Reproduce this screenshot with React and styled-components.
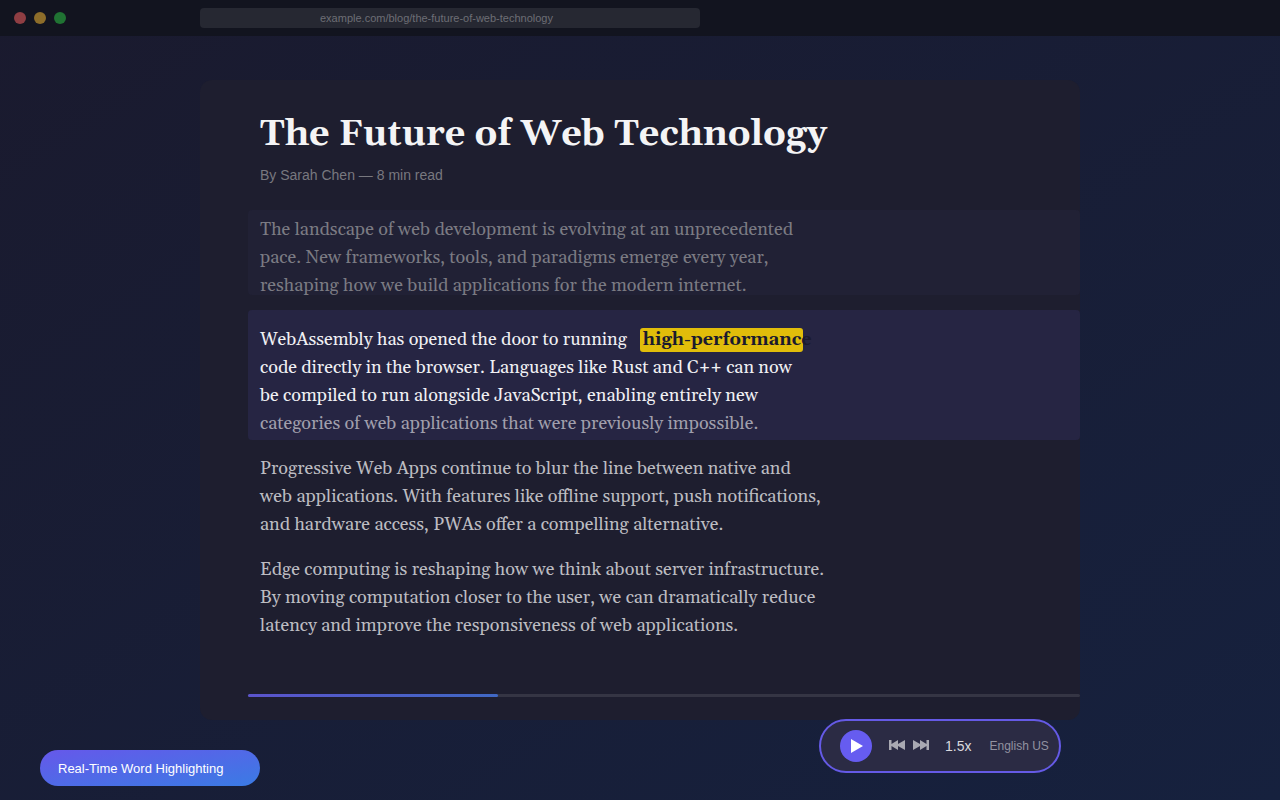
import React, { useState } from "react";
import styled, { createGlobalStyle } from "styled-components";

const App = () => {
  const [playing, setPlaying] = useState(false);

  return (
    <>
      <GlobalStyle />
      <Page>
        <BrowserBar>
          <Lights>
            <Light $color="#8f3e43" />
            <Light $color="#8d6d2a" />
            <Light $color="#207333" />
          </Lights>
          <Address
            type="text"
            aria-label="Address"
            defaultValue="example.com/blog/the-future-of-web-technology"
          />
        </BrowserBar>

        <Main>
          <Article>
            <Title>The Future of Web Technology</Title>
            <Meta>By Sarah Chen — 8 min read</Meta>

            <ReadBlock>
              The landscape of web development is evolving at an unprecedented
              <br />
              pace. New frameworks, tools, and paradigms emerge every year,
              <br />
              reshaping how we build applications for the modern internet.
            </ReadBlock>

            <ActiveBlock>
              <FirstLine>
                WebAssembly has opened the door to running
                <Word>high-performance</Word>
              </FirstLine>
              code directly in the browser. Languages like Rust and C++ can now
              <br />
              be compiled to run alongside JavaScript, enabling entirely new
              <br />
              <Upcoming>
                categories of web applications that were previously impossible.
              </Upcoming>
            </ActiveBlock>

            <Paragraph>
              Progressive Web Apps continue to blur the line between native and
              <br />
              web applications. With features like offline support, push
              notifications,
              <br />
              and hardware access, PWAs offer a compelling alternative.
            </Paragraph>

            <Paragraph>
              Edge computing is reshaping how we think about server
              infrastructure.
              <br />
              By moving computation closer to the user, we can dramatically
              reduce
              <br />
              latency and improve the responsiveness of web applications.
            </Paragraph>

            <Track>
              <Progress style={{ width: "30%" }} />
            </Track>
          </Article>
        </Main>

        <Badge>Real-Time Word Highlighting</Badge>

        <Player>
          <PlayButton
            type="button"
            aria-label="Play"
            aria-pressed={playing}
            onClick={() => setPlaying(!playing)}
          >
            <svg width="32" height="32" viewBox="0 0 32 32">
              <path d="M11 9 L23 16 L11 23 Z" fill="#fff" />
            </svg>
          </PlayButton>
          <Skips>
            <SkipButton type="button" aria-label="Previous">
              <svg width="16" height="12" viewBox="0 0 16 12">
                <path d="M0 0H2.5V4L9 0V4L16 0V10L9 6V10L2.5 6V10H0Z" />
              </svg>
            </SkipButton>
            <SkipButton type="button" aria-label="Next">
              <svg width="16" height="12" viewBox="0 0 16 12">
                <path d="M16 0H13.5V4L7 0V4L0 0V10L7 6V10L13.5 6V10H16Z" />
              </svg>
            </SkipButton>
          </Skips>
          <Speed type="button">1.5x</Speed>
          <Voice type="button">English US</Voice>
        </Player>
      </Page>
    </>
  );
};

const serif = `Gelasio, Georgia, "Liberation Serif", serif`;

const GlobalStyle = createGlobalStyle`
  * {
    box-sizing: border-box;
  }

  body {
    margin: 0;
    font-family: Helvetica, "Liberation Sans", sans-serif;
  }

  button {
    border: none;
    padding: 0;
    background: transparent;
    font-family: inherit;
    cursor: pointer;
  }
`;

const Page = styled.div`
  min-height: 100vh;
  background: linear-gradient(to bottom right, #1a1a2e 0%, #16213e 100%);
`;

const BrowserBar = styled.header`
  display: grid;
  grid-template-columns: 200px minmax(0, 500px);
  align-items: center;
  height: 36px;
  background: #12141f;
`;

const Lights = styled.div`
  display: flex;
  gap: 8px;
  padding-left: 14px;
`;

const Light = styled.span`
  width: 12px;
  height: 12px;
  border-radius: 50%;
  background: ${(props) => props.$color};
`;

const Address = styled.input`
  height: 20px;
  border: none;
  border-radius: 4px;
  padding: 0 120px;
  outline: none;
  background: #262832;
  color: #6d6e75;
  font-family: inherit;
  font-size: 11px;
`;

const Main = styled.main`
  padding: 44px 200px 80px;
`;

const Article = styled.article`
  border-radius: 12px;
  padding: 31px 0 23px 48px;
  background: #1e1e2f;
`;

const Title = styled.h1`
  margin: 0;
  padding-left: 12px;
  color: #f4f4f5;
  font-family: ${serif};
  font-size: 36px;
  font-weight: 700;
  line-height: 48px;
`;

const Meta = styled.p`
  margin: 6px 0 25px;
  padding-left: 12px;
  color: #78787f;
  font-size: 14px;
  line-height: 20px;
`;

const Paragraph = styled.p`
  margin: 0 0 17px;
  padding: 0 12px;
  color: #bcbcc1;
  font-family: ${serif};
  font-size: 18px;
  line-height: 28px;
`;

const ReadBlock = styled(Paragraph)`
  height: 85px;
  margin-bottom: 15px;
  border-radius: 4px;
  padding-top: 6px;
  background: #212135;
  color: #7b7b83;
`;

const ActiveBlock = styled(Paragraph)`
  margin-bottom: 15px;
  border-radius: 4px;
  padding-top: 16px;
  padding-bottom: 2px;
  background: #262543;
  color: #f0f0f3;
`;

const FirstLine = styled.span`
  display: flex;
  align-items: center;
  gap: 13px;
`;

const Word = styled.mark`
  width: 163px;
  height: 24px;
  border-radius: 3px;
  padding-left: 3px;
  background: #e1bd0a;
  color: #1a1a2e;
  font-weight: 700;
  line-height: 24px;
  white-space: nowrap;
`;

const Upcoming = styled.span`
  color: #a09fac;
`;

const Track = styled.div`
  height: 3px;
  margin-top: 54px;
  border-radius: 2px;
  background: #353544;
`;

const Progress = styled.div`
  height: 3px;
  border-radius: 2px;
  background: linear-gradient(90deg, #5b54cc, #4068c4);
`;

const Badge = styled.div`
  position: fixed;
  bottom: 14px;
  left: 40px;
  width: 220px;
  height: 36px;
  border-radius: 18px;
  padding: 0 18px;
  background: linear-gradient(to bottom right, #6658ea, #3a7be4);
  color: #fff;
  font-size: 13px;
  line-height: 38px;
`;

const Player = styled.div`
  position: fixed;
  right: 219px;
  bottom: 27px;
  display: flex;
  align-items: center;
  width: 242px;
  height: 54px;
  border: 2px solid #655ae6;
  border-radius: 27px;
  padding-left: 19px;
  background: #2b2b44;
`;

const PlayButton = styled.button`
  width: 32px;
  height: 32px;
  border-radius: 50%;
  background: #665cf0;

  svg {
    display: block;
  }
`;

const Skips = styled.div`
  display: flex;
  gap: 8px;
  margin: 0 16px 0 17px;
`;

const SkipButton = styled.button`
  svg {
    display: block;
    fill: #a9a9b2;
  }
`;

const Speed = styled.button`
  margin-right: 18px;
  color: #d9d9de;
  font-size: 14px;
`;

const Voice = styled.button`
  color: #9292a0;
  font-size: 12px;
  white-space: nowrap;
`;

export default App;
